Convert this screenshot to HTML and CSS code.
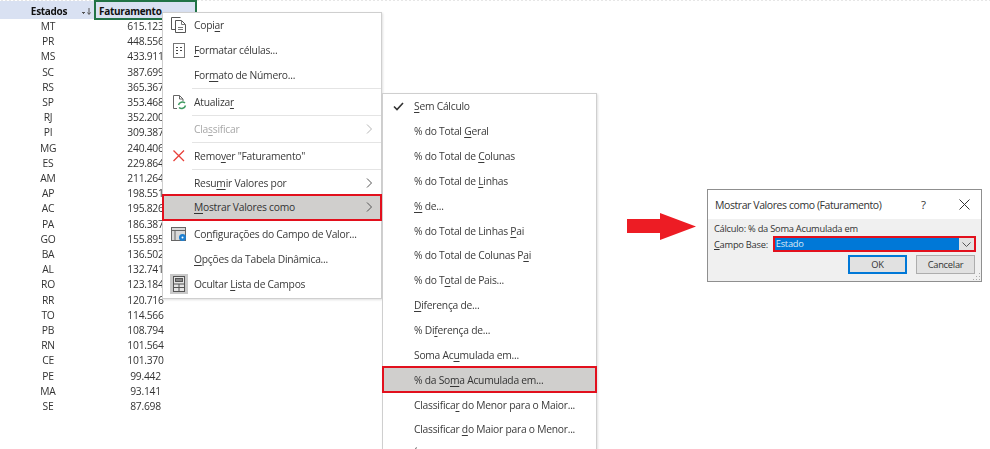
FILE: index.html
```html
<!DOCTYPE html>
<html lang="pt-BR">
<head>
<meta charset="utf-8">
<title>Mostrar Valores como</title>
<link rel="stylesheet" href="styles.css">
</head>
<body>
<main class="desktop">
  <table class="pivot">
    <thead>
      <tr><th class="col-state">Estados<svg class="sort" width="11" height="9" viewBox="0 0 11 9" fill="none" stroke="#555"><path d="M1 5.500H4M2 6.500H3"/><path d="M8 1V7M6.500 5.500L8 7.500L9.500 5.500"/></svg></th><th class="col-value">Faturamento</th></tr>
    </thead>
    <tbody>
      <tr><td>MT</td><td>615.123</td></tr>
      <tr><td>PR</td><td>448.556</td></tr>
      <tr><td>MS</td><td>433.911</td></tr>
      <tr><td>SC</td><td>387.699</td></tr>
      <tr><td>RS</td><td>365.367</td></tr>
      <tr><td>SP</td><td>353.468</td></tr>
      <tr><td>RJ</td><td>352.200</td></tr>
      <tr><td>PI</td><td>309.387</td></tr>
      <tr><td>MG</td><td>240.406</td></tr>
      <tr><td>ES</td><td>229.864</td></tr>
      <tr><td>AM</td><td>211.264</td></tr>
      <tr><td>AP</td><td>198.551</td></tr>
      <tr><td>AC</td><td>195.826</td></tr>
      <tr><td>PA</td><td>186.387</td></tr>
      <tr><td>GO</td><td>155.895</td></tr>
      <tr><td>BA</td><td>136.502</td></tr>
      <tr><td>AL</td><td>132.741</td></tr>
      <tr><td>RO</td><td>123.184</td></tr>
      <tr><td>RR</td><td>120.716</td></tr>
      <tr><td>TO</td><td>114.566</td></tr>
      <tr><td>PB</td><td>108.794</td></tr>
      <tr><td>RN</td><td>101.564</td></tr>
      <tr><td>CE</td><td>101.370</td></tr>
      <tr><td>PE</td><td>99.442</td></tr>
      <tr><td>MA</td><td>93.141</td></tr>
      <tr><td>SE</td><td>87.698</td></tr>
    </tbody>
  </table>

  <nav class="menu menu-main">
    <div class="item"><span class="icon"><svg width="18" height="18" viewBox="0 0 18 18" fill="none" stroke="#555" stroke-width="1"><path d="M10.500 1.500H1.500V13.500H5.500"/><path d="M5.500 4.500H11.500L15.500 8.500V16.500H5.500Z" fill="#fff"/><path d="M11.500 4.500V8.500H15.500M8 11.500H13M8 13.500H13" stroke="#777"/></svg></span><span>Copi<u>a</u>r</span></div>
    <div class="item"><span class="icon"><svg width="16" height="17" viewBox="0 0 16 17" fill="none" stroke="#777"><rect x="2.500" y="1.500" width="11" height="14"/><path d="M5 5.500H7M5 8.500H7M5 11.500H7M9 5.500H11M9 8.500H11" stroke="#444"/></svg></span><span><u>F</u>ormatar células...</span></div>
    <div class="item"><span class="icon"></span><span>For<u>m</u>ato de Número...</span></div>
    <hr class="sep">
    <div class="item"><span class="icon"><svg width="18" height="18" viewBox="0 0 18 18" fill="none" stroke="#666"><path d="M3.500 15.500V2.500H9.500L13 6V8M3.500 15.500H7M9.500 2.500V6H13"/><path d="M8.500 12A4 4 0 0 1 15 10M15.500 12.500A4 4 0 0 1 9 14.500" stroke="#3f9a62" stroke-width="1.500"/></svg></span><span>Atualiza<u>r</u></span></div>
    <hr class="sep">
    <div class="item item-off"><span class="icon"></span><span>Cla<u>s</u>sificar</span><svg class="chev" width="7" height="10" viewBox="0 0 7 10" fill="none" stroke="#b5b5b5"><path d="M1 .5L5.500 5L1 9.500"/></svg></div>
    <hr class="sep">
    <div class="item"><span class="icon"><svg width="14" height="14" viewBox="0 0 14 14" fill="none" stroke="#e8403a" stroke-width="1.300"><path d="M1.500 1.500L12 12M12 1.500L1.500 12"/></svg></span><span>Remo<u>v</u>er "Faturamento"</span></div>
    <hr class="sep">
    <div class="item item-short"><span class="icon"></span><span>Resu<u>m</u>ir Valores por</span><svg class="chev" width="7" height="10" viewBox="0 0 7 10" fill="none" stroke="#555"><path d="M1 .5L5.500 5L1 9.500"/></svg></div>
    <div class="item item-picked"><span class="icon"></span><span><u>M</u>ostrar Valores como</span><svg class="chev" width="7" height="10" viewBox="0 0 7 10" fill="none" stroke="#555"><path d="M1 .5L5.500 5L1 9.500"/></svg></div>
    <hr class="sep sep-clear">
    <div class="item"><span class="icon"><svg width="18" height="17" viewBox="0 0 18 17" fill="none"><rect x="1.500" y="1.500" width="14" height="13" fill="#d9d9d9" stroke="#666"/><path d="M1.500 4.500H15.500M5 4.500V14.500" stroke="#666"/><circle cx="12.500" cy="11.500" r="3.500" fill="#1e7fd0"/><circle cx="12.500" cy="11.500" r="1" fill="#fff"/></svg></span><span>Co<u>n</u>figurações do Campo de Valor...</span></div>
    <div class="item"><span class="icon"></span><span><u>O</u>pções da Tabela Dinâmica...</span></div>
    <div class="item"><span class="icon icon-box"><svg width="14" height="16" viewBox="0 0 14 16" fill="#e4e4e4" stroke="#555"><rect x="1.500" y=".5" width="11" height="15"/><rect x="3.500" y="2.500" width="7" height="3" fill="#888"/><path d="M1.500 8H12.500M1.500 11.500H12.500M7 8V15.500"/></svg></span><span>Ocultar <u>L</u>ista de Campos</span></div>
  </nav>

  <nav class="menu menu-sub">
    <div class="item"><span class="icon"><svg width="11" height="9" viewBox="0 0 11 9" fill="none" stroke="#333" stroke-width="1.600"><path d="M1 4.500L4 7.500L10 1"/></svg></span><span><u>S</u>em Cálculo</span></div>
    <div class="item"><span class="icon"></span><span>% do Total <u>G</u>eral</span></div>
    <div class="item"><span class="icon"></span><span>% do Total de <u>C</u>olunas</span></div>
    <div class="item"><span class="icon"></span><span>% do Total de <u>L</u>inhas</span></div>
    <div class="item"><span class="icon"></span><span><u>%</u> de...</span></div>
    <div class="item"><span class="icon"></span><span>% do Total de Linhas <u>P</u>ai</span></div>
    <div class="item"><span class="icon"></span><span>% do Total de Colunas P<u>a</u>i</span></div>
    <div class="item"><span class="icon"></span><span>% do T<u>o</u>tal de Pais...</span></div>
    <div class="item"><span class="icon"></span><span><u>D</u>iferença de...</span></div>
    <div class="item"><span class="icon"></span><span>% Di<u>f</u>erença de...</span></div>
    <div class="item"><span class="icon"></span><span>Soma Ac<u>u</u>mulada em...</span></div>
    <div class="item item-picked"><span class="icon"></span><span>% da So<u>m</u>a Acumulada em...</span></div>
    <div class="item"><span class="icon"></span><span>Classifica<u>r</u> do Menor para o Maior...</span></div>
    <div class="item"><span class="icon"></span><span>Classificar <u>d</u>o Maior para o Menor...</span></div>
    <div class="item"><span class="icon"></span><span><u>Í</u>ndice</span></div>
  </nav>

  <svg class="arrow" width="70" height="28" viewBox="0 0 70 28"><path d="M0 6H33V0L69 13.500L33 27V20H0Z" fill="#ed1c24"/></svg>

  <section class="dialog">
    <header class="dialog-title">
      <span class="dialog-name">Mostrar Valores como (Faturamento)</span>
      <span class="dialog-help">?</span>
      <svg class="dialog-close" width="11" height="11" viewBox="0 0 11 11" fill="none" stroke="#333"><path d="M.5 .5L10.500 10.500M10.500 .5L.5 10.500"/></svg>
    </header>
    <div class="dialog-body">
      <p class="dialog-calc">Cálculo: % da Soma Acumulada em</p>
      <div class="dialog-field">
        <label class="dialog-label"><u>C</u>ampo Base:</label>
        <div class="select"><span class="select-value">Estado</span><span class="select-btn"><svg width="9" height="5" viewBox="0 0 9 5" fill="none" stroke="#555"><path d="M.5 .5L4.500 4.500L8.500 .5"/></svg></span></div>
      </div>
      <div class="dialog-actions">
        <button class="btn btn-main">OK</button>
        <button class="btn">Cancelar</button>
      </div>
      <svg class="grip" width="8" height="8" viewBox="0 0 8 8" fill="#aaa"><path d="M6 0h1v1H6zM3 3h1v1H3zM6 3h1v1H6zM0 6h1v1H0zM3 6h1v1H3zM6 6h1v1H6z"/></svg>
    </div>
  </section>
</main>
</body>
</html>
```
FILE: styles.css
```css
* { box-sizing: border-box; }

html, body {
  margin: 0;
  height: 449px;
  overflow: hidden;
  background: #fff;
}

.desktop {
  position: relative;
  width: 990px;
  height: 449px;
  overflow: hidden;
  font-family: "Open Sans", "Noto Sans", sans-serif;
  font-size: 10.3px;
  letter-spacing: -0.25px;
  color: #333;
  filter: blur(0.35px);
  background: linear-gradient(90deg, #e6e6e6 50%, transparent 50%) 197px 0 / 4px 1px repeat-x;
}

.pivot {
  width: 197px;
  border-collapse: collapse;
  table-layout: fixed;
}

.pivot th {
  height: 18px;
  padding: 1px 0 0 4px;
  background: #d9e1f2;
  color: #111;
  font-weight: 700;
  font-size: 10px;
  letter-spacing: -0.3px;
  position: relative;
}

.col-state { width: 95px; }

.col-value {
  border: 2px solid #217346;
  text-align: left;
  padding-left: 3px !important;
}

.sort {
  position: absolute;
  right: 2px;
  top: 6px;
}

.pivot td {
  height: 15.2px;
  padding: 0 0 2px;
  line-height: 13.2px;
  text-align: center;
  color: #333;
}

.pivot td:first-child { padding-left: 1px; }

.menu {
  position: absolute;
  display: flex;
  flex-direction: column;
  background: #fff;
  border: 1px solid #cfcfcf;
  box-shadow: 1px 1px 2px rgba(0, 0, 0, 0.12);
  color: #3a3a3a;
}

.menu-main {
  left: 162px;
  top: 12px;
  width: 220px;
  height: 287px;
}

.menu-sub {
  left: 382px;
  top: 93px;
  width: 215px;
  height: 380px;
}

.item {
  display: flex;
  flex: none;
  align-items: center;
  height: 25px;
  padding: 0 8px 1px 0;
  white-space: nowrap;
}

.item-short { height: 24px; }

.menu-sub .item {
  height: 24.85px;
  padding-bottom: 0;
}

.item u {
  text-underline-offset: 2px;
  text-decoration-thickness: 1px;
}

.icon {
  display: flex;
  flex: none;
  align-items: center;
  justify-content: center;
  width: 31px;
  height: 100%;
}

.icon-box {
  padding: 4px 7px;
}

.icon-box svg {
  background: #c9c9c9;
  outline: 2px solid #c9c9c9;
}

.chev { margin-left: auto; }

.item-off { color: #a8a8a8; }

.item-picked {
  background: #d0cfcd;
  outline: 2px solid #e2101d;
  outline-offset: -1px;
  color: #333;
}

.sep {
  flex: none;
  width: calc(100% - 29px);
  height: 2px;
  margin: 0 0 0 29px;
  border: 0;
  border-top: 1px solid #e4e4e4;
}

.sep-clear { border-top-color: transparent; }

.arrow {
  position: absolute;
  left: 627px;
  top: 213px;
}

.dialog {
  position: absolute;
  left: 707px;
  top: 189px;
  width: 275px;
  height: 93px;
  display: flex;
  flex-direction: column;
  border: 1px solid #8f8f8f;
  background: #f0f0f0;
}

.dialog-title {
  display: flex;
  align-items: center;
  flex: none;
  height: 29px;
  padding-left: 7px;
  background: #fff;
  font-size: 10.5px;
  letter-spacing: -0.42px;
}

.dialog-name { width: 206px; }

.dialog-help { width: 38px; font-size: 11.500px; }

.dialog-body {
  position: relative;
  flex: 1;
  padding: 3px 5px 0 6px;
  font-size: 9.300px;
}

.dialog-calc {
  margin: 0;
  line-height: 14px;
}

.dialog-field {
  display: flex;
  align-items: center;
  height: 16px;
}

.dialog-label { width: 59px; }

.select {
  display: flex;
  width: 204px;
  height: 16px;
  border: 2px solid #e2101d;
  background: #0078d7;
  color: #dbe9f6;
}

.select-value {
  flex: 1;
  padding-left: 1px;
  line-height: 12px;
}

.select-btn {
  display: flex;
  align-items: center;
  justify-content: center;
  width: 15px;
  background: #e1e1e1;
}

.dialog-actions {
  display: flex;
  justify-content: flex-end;
  gap: 9px;
  margin-top: 3px;
  padding-right: 1px;
}

.btn {
  width: 59px;
  height: 19px;
  padding: 0;
  border: 1px solid #adadad;
  background: #e1e1e1;
  font: inherit;
  letter-spacing: inherit;
  color: #333;
}

.btn-main {
  border: 2px solid #0078d7;
}

.grip {
  position: absolute;
  right: 0;
  bottom: 0;
}
```
